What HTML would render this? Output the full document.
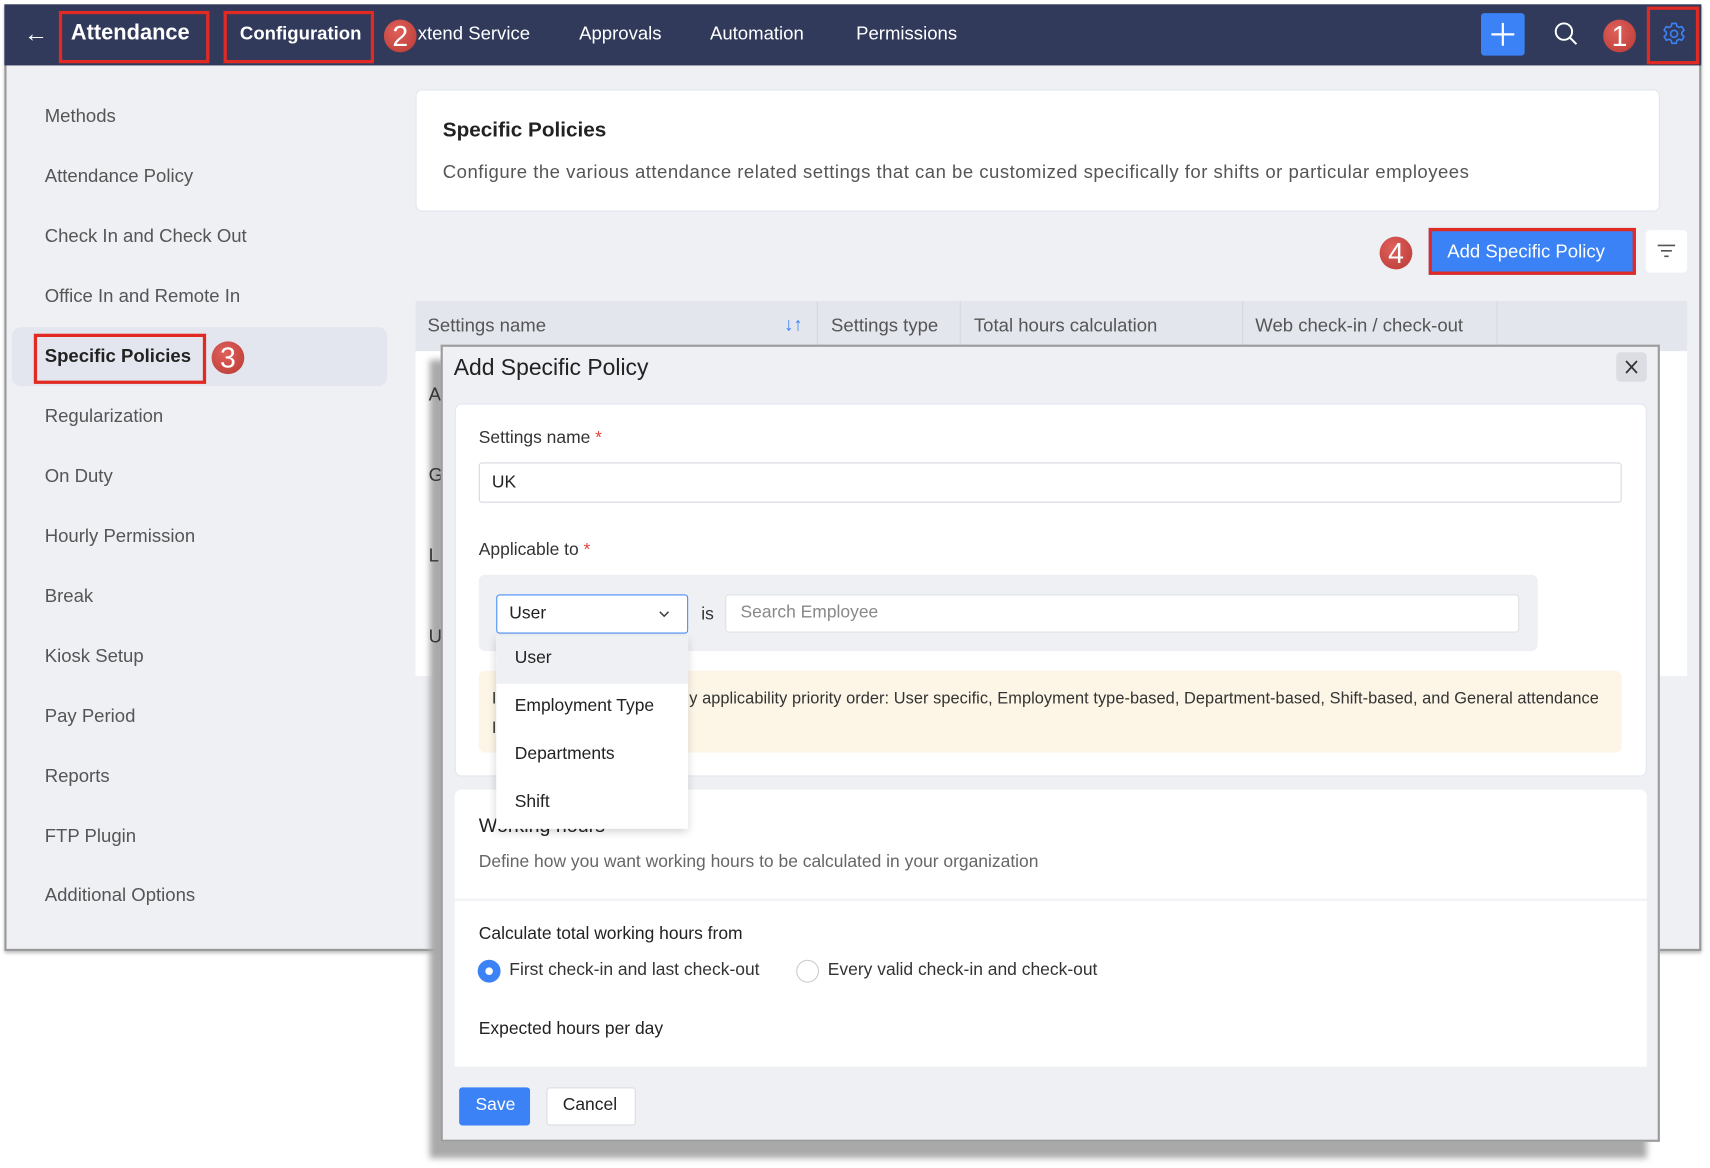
<!DOCTYPE html>
<html><head><meta charset="utf-8"><style>
*{box-sizing:border-box;margin:0;padding:0}
html,body{width:1710px;height:1168px;overflow:hidden;background:#fff;font-family:"Liberation Sans",sans-serif}
#s{position:absolute;left:0;top:0;width:1568px;height:1071px;transform:scale(1.0906);transform-origin:0 0}
.a{position:absolute}
.t{position:absolute;white-space:nowrap;line-height:1}
.badge{position:absolute;width:30px;height:30px;border-radius:50%;background:radial-gradient(circle at 40% 35%,#e0605a,#b83a35);color:#fff;font-size:26px;text-align:center;line-height:30px}
.red{position:absolute;border:3px solid #e02a23}
.side{color:#555;font-size:17px;left:41px}
</style></head><body><div id="s">
<div class="a" style="left:4px;top:4px;width:1556px;height:868px;background:#eef0f4;border:2px solid #9a9a9a;box-shadow:0 2px 3px #bbb"></div>
<div class="a" style="left:4px;top:4px;width:1556px;height:56px;background:#313a5b"></div>
<div class="t" style="left:22px;top:20px;color:#fff;font-size:22px">&#8592;</div>
<div class="t" style="left:65px;top:20px;color:#fff;font-size:20px;font-weight:bold">Attendance</div>
<div class="red" style="left:54px;top:10px;width:138px;height:48px"></div>
<div class="t" style="left:220px;top:22px;color:#fff;font-size:17px;font-weight:bold">Configuration</div>
<div class="a" style="left:210px;top:55px;width:132px;height:3px;background:#3b82f6"></div>
<div class="red" style="left:205px;top:10px;width:138px;height:48px"></div>
<div class="badge" style="left:352px;top:18px">2</div>
<div class="t" style="left:383px;top:22px;color:#fff;font-size:17px">xtend Service</div>
<div class="t" style="left:531px;top:22px;color:#fff;font-size:17px">Approvals</div>
<div class="t" style="left:651px;top:22px;color:#fff;font-size:17px">Automation</div>
<div class="t" style="left:785px;top:22px;color:#fff;font-size:17px">Permissions</div>
<div class="a" style="left:1358px;top:12px;width:40px;height:39px;background:#3b82f6;border-radius:3px"></div>
<svg class="a" style="left:1358px;top:12px" width="40" height="39"><path d="M20 9v21M9.5 19.5h21" stroke="#fff" stroke-width="2"/></svg>
<svg class="a" style="left:1424px;top:19px" width="26" height="26"><circle cx="10" cy="10" r="7.5" stroke="#fff" stroke-width="1.8" fill="none"/><path d="M15.5 15.5l6 6" stroke="#fff" stroke-width="1.8"/></svg>
<div class="badge" style="left:1470px;top:18px">1</div>
<svg class="a" style="left:1523px;top:19px" width="24" height="24" viewBox="0 0 24 24"><path d="M10 2.5h4l.6 2.6 2 1.1 2.5-.9 2 3.4-2 1.8v2.2l2 1.8-2 3.4-2.5-.9-2 1.1-.6 2.6h-4l-.6-2.6-2-1.1-2.5.9-2-3.4 2-1.8v-2.2l-2-1.8 2-3.4 2.5.9 2-1.1z" fill="none" stroke="#3b82f6" stroke-width="1.5" stroke-linejoin="round"/><circle cx="12" cy="12" r="3.2" fill="none" stroke="#3b82f6" stroke-width="1.5"/></svg>
<div class="red" style="left:1510px;top:6px;width:48px;height:53px"></div>

<div class="t side" style="top:98px">Methods</div>
<div class="t side" style="top:153px">Attendance Policy</div>
<div class="t side" style="top:208px">Check In and Check Out</div>
<div class="t side" style="top:263px">Office In and Remote In</div>
<div class="a" style="left:11px;top:300px;width:344px;height:54px;background:#e4e6ef;border-radius:8px"></div>
<div class="t side" style="top:318px;color:#222;font-weight:bold">Specific Policies</div>
<div class="red" style="left:31px;top:306px;width:158px;height:46px"></div>
<div class="badge" style="left:194px;top:313px">3</div>
<div class="t side" style="top:373px">Regularization</div>
<div class="t side" style="top:428px">On Duty</div>
<div class="t side" style="top:483px">Hourly Permission</div>
<div class="t side" style="top:538px">Break</div>
<div class="t side" style="top:593px">Kiosk Setup</div>
<div class="t side" style="top:648px">Pay Period</div>
<div class="t side" style="top:703px">Reports</div>
<div class="t side" style="top:758px">FTP Plugin</div>
<div class="t side" style="top:812px">Additional Options</div>

<div class="a" style="left:381px;top:82px;width:1141px;height:112px;background:#fff;border-radius:6px;border:1px solid #e2e6ee"></div>
<div class="t" style="left:406px;top:110px;font-size:19px;font-weight:bold;color:#222">Specific Policies</div>
<div class="t" style="left:406px;top:149px;font-size:17px;color:#555;letter-spacing:.45px">Configure the various attendance related settings that can be customized specifically for shifts or particular employees</div>
<div class="badge" style="left:1265px;top:217px">4</div>
<div class="a" style="left:1310px;top:209px;width:190px;height:43px;background:#3b82f6;border:3px solid #e02a23"></div>
<div class="t" style="left:1327px;top:222px;color:#fff;font-size:17px">Add Specific Policy</div>
<div class="a" style="left:1509px;top:211px;width:38px;height:39px;background:#fff;border-radius:4px"></div>
<svg class="a" style="left:1519px;top:223px" width="18" height="14"><path d="M1 2h16M4 7h10M7 12h4" stroke="#555" stroke-width="1.5"/></svg>
<div class="a" style="left:381px;top:276px;width:1166px;height:46px;background:#e4e6ee"></div>
<div class="a" style="left:749px;top:276px;width:1px;height:46px;background:#d6d8e2"></div>
<div class="a" style="left:880px;top:276px;width:1px;height:46px;background:#d6d8e2"></div>
<div class="a" style="left:1139px;top:276px;width:1px;height:46px;background:#d6d8e2"></div>
<div class="a" style="left:1372px;top:276px;width:1px;height:46px;background:#d6d8e2"></div>
<div class="t" style="left:392px;top:290px;font-size:17px;color:#555">Settings name</div>
<div class="t" style="left:719px;top:289px;font-size:17px;color:#3b82f6">&#8595;&#8593;</div>
<div class="t" style="left:762px;top:290px;font-size:17px;color:#555">Settings type</div>
<div class="t" style="left:893px;top:290px;font-size:17px;color:#555">Total hours calculation</div>
<div class="t" style="left:1151px;top:290px;font-size:17px;color:#555">Web check-in / check-out</div>
<div class="a" style="left:381px;top:322px;width:1166px;height:298px;background:#fff"></div>

<div class="a" style="left:394px;top:330px;width:1116px;height:732px;background:#a9a9a9;filter:blur(3px)"></div>
<div class="t" style="left:393px;top:353px;font-size:17px;color:#333">A</div>
<div class="t" style="left:393px;top:427px;font-size:17px;color:#333">G</div>
<div class="t" style="left:393px;top:501px;font-size:17px;color:#333">L</div>
<div class="t" style="left:393px;top:575px;font-size:17px;color:#333">U</div>
<div class="a" style="left:404px;top:316px;width:1118px;height:731px;background:#eef0f4;border:2px solid #9c9c9c"></div>
<div class="t" style="left:416px;top:327px;font-size:21px;color:#222">Add Specific Policy</div>
<div class="a" style="left:1482px;top:323px;width:28px;height:27px;background:#dcdde2;border-radius:4px"></div>
<svg class="a" style="left:1482px;top:323px" width="28" height="27"><path d="M9 8l10 11M19 8L9 19" stroke="#333" stroke-width="1.6"/></svg>
<div class="a" style="left:417px;top:370px;width:1093px;height:342px;background:#fff;border-radius:6px;border:1px solid #e2e6ee"></div>
<div class="t" style="left:439px;top:394px;font-size:16px;color:#333">Settings name <span style="color:#e0453c">*</span></div>
<div class="a" style="left:439px;top:424px;width:1048px;height:37px;background:#fff;border:1px solid #d7d9df;border-radius:3px"></div>
<div class="t" style="left:451px;top:435px;font-size:16px;color:#222">UK</div>
<div class="t" style="left:439px;top:497px;font-size:16px;color:#333">Applicable to <span style="color:#e0453c">*</span></div>
<div class="a" style="left:439px;top:527px;width:971px;height:70px;background:#eef0f4;border-radius:6px"></div>
<div class="a" style="left:455px;top:545px;width:176px;height:36px;background:#fff;border:1px solid #4b8ef5;border-radius:3px"></div>
<div class="t" style="left:467px;top:555px;font-size:16px;color:#222">User</div>
<svg class="a" style="left:603px;top:558px" width="12" height="10"><path d="M2 3l4 4 4-4" stroke="#444" stroke-width="1.4" fill="none"/></svg>
<div class="t" style="left:643px;top:556px;font-size:16px;color:#333">is</div>
<div class="a" style="left:665px;top:545px;width:728px;height:35px;background:#fff;border:1px solid #dfe1e6;border-radius:3px"></div>
<div class="t" style="left:679px;top:554px;font-size:16px;color:#888">Search Employee</div>
<div class="a" style="left:439px;top:615px;width:1048px;height:75px;background:#fdf6e7;border-radius:6px"></div>
<div class="t" style="left:451px;top:633px;font-size:15px;color:#333">I</div>
<div class="t" style="left:451px;top:660px;font-size:15px;color:#333">I</div>
<div class="t" style="left:632px;top:633px;font-size:15px;color:#333;letter-spacing:.05px">y applicability priority order: User specific, Employment type-based, Department-based, Shift-based, and General attendance</div>

<div class="a" style="left:417px;top:724px;width:1093px;height:254px;background:#fff;border-radius:6px 6px 0 0"></div>
<div class="t" style="left:439px;top:748px;font-size:18px;color:#222">Working hours</div>
<div class="t" style="left:439px;top:783px;font-size:16px;color:#666">Define how you want working hours to be calculated in your organization</div>
<div class="a" style="left:417px;top:824px;width:1093px;height:2px;background:#f1f2f5"></div>
<div class="t" style="left:439px;top:849px;font-size:16px;color:#222">Calculate total working hours from</div>
<div class="a" style="left:438px;top:880px;width:21px;height:21px;border-radius:50%;background:#3b82f6"></div>
<div class="a" style="left:445px;top:887px;width:7px;height:7px;border-radius:50%;background:#fff"></div>
<div class="t" style="left:467px;top:882px;font-size:16px;color:#333">First check-in and last check-out</div>
<div class="a" style="left:730px;top:880px;width:21px;height:21px;border-radius:50%;border:1.5px solid #ccc;background:#fff"></div>
<div class="t" style="left:759px;top:882px;font-size:16px;color:#333">Every valid check-in and check-out</div>
<div class="t" style="left:439px;top:936px;font-size:16px;color:#222">Expected hours per day</div>

<div class="a" style="left:455px;top:583px;width:176px;height:177px;background:#fff;box-shadow:0 3px 8px rgba(0,0,0,.18)"></div>
<div class="a" style="left:455px;top:583px;width:176px;height:44px;background:#eef0f4"></div>
<div class="t" style="left:472px;top:596px;font-size:16px;color:#222">User</div>
<div class="t" style="left:472px;top:640px;font-size:16px;color:#222">Employment Type</div>
<div class="t" style="left:472px;top:684px;font-size:16px;color:#222">Departments</div>
<div class="t" style="left:472px;top:728px;font-size:16px;color:#222">Shift</div>

<div class="a" style="left:421px;top:997px;width:65px;height:35px;background:#3b82f6;border-radius:3px"></div>
<div class="t" style="left:436px;top:1006px;font-size:16px;color:#fff">Save</div>
<div class="a" style="left:501px;top:997px;width:82px;height:35px;background:#fff;border:1px solid #dcdde2;border-radius:3px"></div>
<div class="t" style="left:516px;top:1006px;font-size:16px;color:#222">Cancel</div>
</div></body></html>
